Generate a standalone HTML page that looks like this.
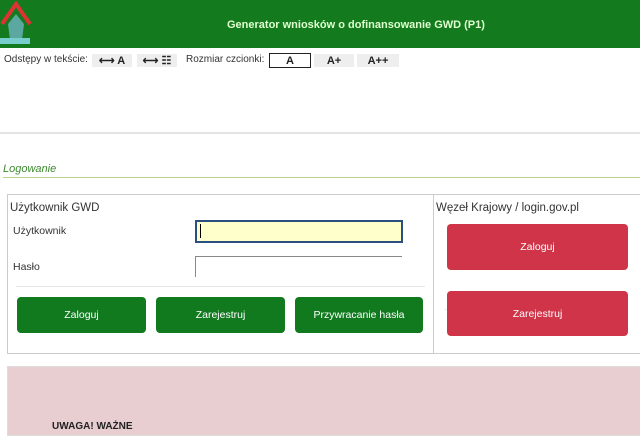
<html><head><style>
body{margin:0;width:640px;height:426px;overflow:hidden;background:#fff;font-family:"Liberation Sans",sans-serif;font-size:11px;color:#333;position:relative}
.a{position:absolute}
.gb{position:absolute;background:#117a1f;color:#fff;border-radius:4px;display:flex;align-items:center;justify-content:center;font-size:10.5px}
.rb{position:absolute;background:#cf3448;color:#fff;border-radius:4px;display:flex;align-items:center;justify-content:center;font-size:10.5px}
.tb{position:absolute;top:54px;height:13px;background:#eee;font-size:11px;font-weight:bold;display:flex;align-items:center;justify-content:center;color:#222}
</style></head><body>
<div class="a" style="left:0;top:0;width:640px;height:48px;background:#147a1e"></div>
<svg class="a" style="left:0;top:0" width="32" height="46"><path d="M2 24 L16 4 L30 24" stroke="#d33" stroke-width="4" fill="none"/><path d="M8 24 L16 14 L24 24 L22 40 L10 40Z" fill="#5aa8a0"/><rect x="0" y="38" width="30" height="6" fill="#7cc"/></svg>
<div class="a" style="left:227px;top:19px;white-space:nowrap;color:#dfffd0;font-weight:bold;font-size:11px">Generator wniosków o dofinansowanie GWD (P1)</div>
<div class="a" style="left:4px;top:54px;font-size:10px">Odstępy w tekście:</div>
<div class="tb" style="left:92px;width:40px">⟷ A</div>
<div class="tb" style="left:137px;width:40px">⟷ ☷</div>
<div class="a" style="left:186px;top:54px;font-size:10px">Rozmiar czcionki:</div>
<div class="tb" style="left:269px;width:40px;top:53px;height:13px;border:1px solid #222;background:#fff">A</div>
<div class="tb" style="left:314px;width:40px">A+</div>
<div class="tb" style="left:357px;width:42px">A++</div>
<div class="a" style="left:0;top:132px;width:640px;height:2px;background:#e4e4e4"></div>
<div class="a" style="left:3px;top:163px;font-style:italic;color:#3c8a2e;font-size:11px">Logowanie</div>
<div class="a" style="left:3px;top:177px;width:637px;height:1px;background:#b9d48a"></div>
<div class="a" style="left:7px;top:194px;width:640px;height:160px;border:1px solid #ccc;box-sizing:border-box"></div>
<div class="a" style="left:433px;top:194px;width:1px;height:160px;background:#ccc"></div>
<div class="a" style="left:10px;top:202px;font-size:11.5px">Użytkownik GWD</div>
<div class="a" style="left:13px;top:225px;font-size:10.5px">Użytkownik</div>
<div class="a" style="left:13px;top:261px;font-size:10.5px">Hasło</div>
<div class="a" style="left:195px;top:220px;width:208px;height:23px;box-sizing:border-box;border:2px solid #2a4f80;background:#ffffcc"></div>
<div class="a" style="left:200px;top:224px;width:1px;height:14px;background:#000"></div>
<div class="a" style="left:195px;top:256px;width:207px;height:21px;box-sizing:border-box;border-top:1px solid #888;border-left:1px solid #888"></div>
<div class="a" style="left:16px;top:286px;width:409px;height:1px;background:#e6e6e6"></div>
<div class="gb" style="left:17px;top:297px;width:129px;height:36px">Zaloguj</div>
<div class="gb" style="left:156px;top:297px;width:129px;height:36px">Zarejestruj</div>
<div class="gb" style="left:295px;top:297px;width:128px;height:36px">Przywracanie hasła</div>
<div class="a" style="left:436px;top:202px;font-size:11.5px">Węzeł Krajowy / login.gov.pl</div>
<div class="rb" style="left:447px;top:224px;width:181px;height:46px">Zaloguj</div>
<div class="a" style="left:444px;top:309px;width:184px;height:1px;background:#eee"></div>
<div class="rb" style="left:447px;top:291px;width:181px;height:45px">Zarejestruj</div>
<div class="a" style="left:7px;top:366px;width:640px;height:70px;background:#e8cdd1;border:1px solid #ddd;box-sizing:border-box"></div>
<div class="a" style="left:52px;top:421px;font-size:10px;font-weight:bold;color:#222">UWAGA! WAŻNE</div>
</body></html>
